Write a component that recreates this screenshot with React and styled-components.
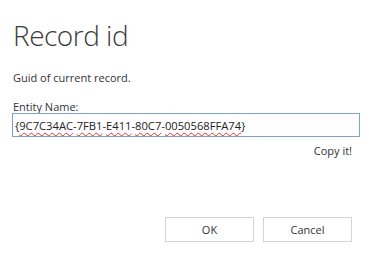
import React from 'react';
import styled, { createGlobalStyle } from 'styled-components';

const GlobalStyle = createGlobalStyle`
  html, body {
    margin: 0;
    padding: 0;
    background: #ffffff;
  }
  body {
    font-family: "Open Sans", "Noto Sans", sans-serif;
    color: #333333;
  }
`;

const Dialog = styled.div`
  width: 369px;
  height: 257px;
  box-sizing: border-box;
  padding: 15px 9px 0 12px;
  display: flex;
  flex-direction: column;
`;

const Title = styled.h1`
  margin: 0 0 0 1px;
  font-weight: 300;
  font-size: 28px;
  line-height: 40px;
  color: #3b3b3b;
  letter-spacing: -0.5px;
`;

const Description = styled.p`
  margin: 16px 0 0 1px;
  font-size: 11px;
  line-height: 14px;
  color: #333333;
`;

const Label = styled.label`
  display: block;
  margin: 16px 0 0 1px;
  font-size: 11px;
  line-height: 12px;
  color: #333333;
`;

const Field = styled.div`
  height: 24px;
  box-sizing: border-box;
  border: 1px solid #7da2ce;
  display: flex;
  align-items: center;
  padding: 0 2px;
  font-size: 11.2px;
  color: #222222;
  white-space: nowrap;
`;

const Misspelled = styled.span`
  text-decoration: underline wavy #e03030;
  text-decoration-thickness: 1px;
  text-underline-offset: 2px;
  text-decoration-skip-ink: none;
`;

const CopyRow = styled.div`
  display: flex;
  justify-content: flex-end;
  margin-top: 7px;
  padding-right: 8px;
`;

const CopyLink = styled.span`
  font-size: 11px;
  line-height: 14px;
  color: #333333;
  cursor: pointer;
`;

const Footer = styled.div`
  display: flex;
  justify-content: flex-end;
  gap: 9px;
  margin-top: 59px;
  padding-right: 8px;
`;

const Button = styled.button`
  width: 89px;
  height: 25px;
  box-sizing: border-box;
  background: #ffffff;
  border: 1px solid #d4d4d4;
  font-family: "Open Sans", "Noto Sans", sans-serif;
  font-size: 11px;
  color: #333333;
  padding: 0;
  cursor: pointer;
`;

const guidParts = ['9C7C34AC', '7FB1', 'E411', '80C7', '0050568FFA74'];

export default function App() {
  return (
    <>
      <GlobalStyle />
      <Dialog>
        <Title>Record id</Title>
        <Description>Guid of current record.</Description>
        <Label>Entity Name:</Label>
        <Field>
          {'{'}
          {guidParts.map((part, i) => (
            <React.Fragment key={part}>
              <Misspelled>{part}</Misspelled>
              {i < guidParts.length - 1 ? '-' : ''}
            </React.Fragment>
          ))}
          {'}'}
        </Field>
        <CopyRow>
          <CopyLink>Copy it!</CopyLink>
        </CopyRow>
        <Footer>
          <Button>OK</Button>
          <Button>Cancel</Button>
        </Footer>
      </Dialog>
    </>
  );
}
